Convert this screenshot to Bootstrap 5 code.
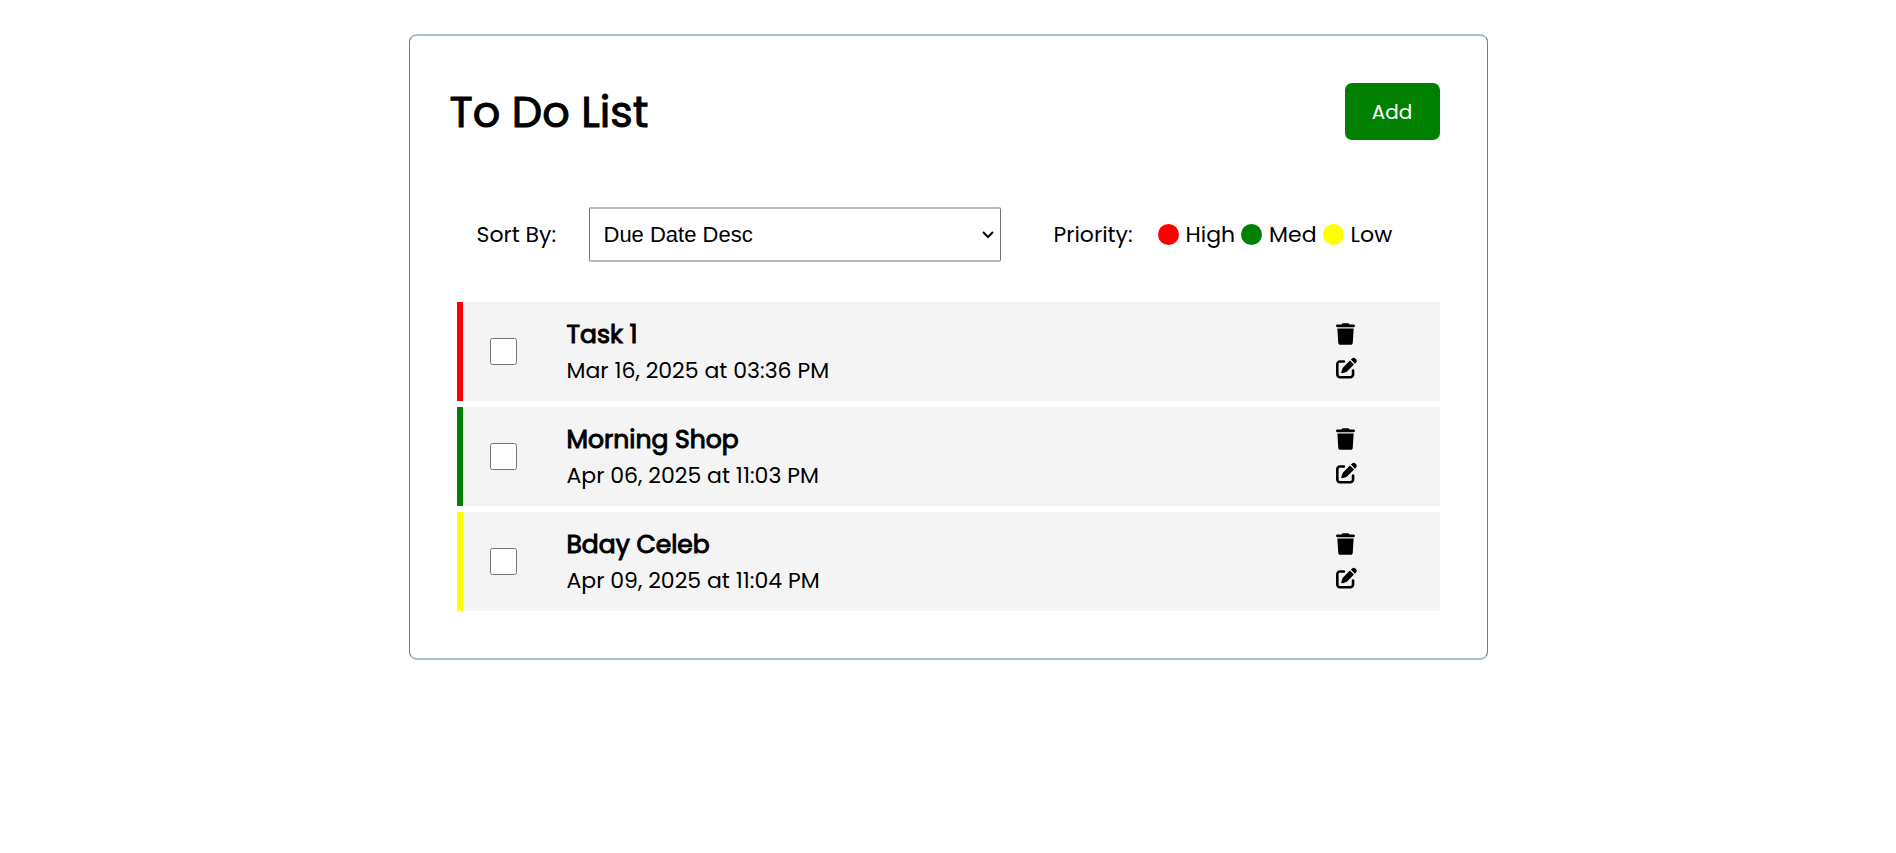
<!DOCTYPE html>
<html lang="en">
<head>
<meta charset="utf-8">
<meta name="viewport" content="width=device-width, initial-scale=1">
<title>To Do List</title>
<link href="https://cdn.jsdelivr.net/npm/bootstrap@5.3.0/dist/css/bootstrap.min.css" rel="stylesheet">
<style>
  body { font-family: Poppins, Inter, sans-serif; font-size: 22px; line-height: 36px; color: #000; background: #fff; }
  .todo { max-width: 1079px; margin-top: 34px; padding: 47px 47px 47px 40px; border: 1px solid #6283a3; border-width: 2px 1px; border-top-color: #a8bed3; border-bottom-color: #a8bed3; border-radius: 8px; }
  .todo-title { font-size: 43px; line-height: 56px; font-weight: 400; -webkit-text-stroke: 1px #000; }
  .btn-add { width: 95px; height: 57px; font-size: 20px; color: #fff; background: green; border: 0; border-radius: 7px; }
  .btn-add:hover { color: #fff; background: #006b00; }
  .controls { margin-top: 67px; padding-left: 27px; }
  .sort-label { width: 112px; }
  .sort-select { appearance: none; width: 412px; height: 55px; padding: 0 14px; font-family: "Liberation Sans", Arial, sans-serif; font-size: 22px; color: #000; background: #fff url("data:image/svg+xml,%3Csvg xmlns='http://www.w3.org/2000/svg' viewBox='0 0 12 8'%3E%3Cpath d='M1 1l5 5 5-5' fill='none' stroke='%23000' stroke-width='2'/%3E%3C/svg%3E") no-repeat right 6px center / 12px 8px; border: 1px solid #767676; border-width: 2px 1px; border-top-color: #b9b9b9; border-bottom-color: #b9b9b9; border-radius: 2px; }
  .priority { margin-left: 53px; }
  .priority-label { width: 104px; }
  .legend-list { gap: 6px; }
  .legend-item { gap: 7px; }
  .dot { width: 21px; height: 21px; border-radius: 50%; }
  .tasks { margin-top: 40px; padding-left: 7px; gap: 6px; }
  .task { min-height: 99px; padding-left: 27px; background: #f4f4f4; border-left: 6px solid; }
  .level-high { border-color: red; }
  .level-med { border-color: green; }
  .level-low { border-color: yellow; }
  .bg-high { background: red; }
  .bg-med { background: green; }
  .bg-low { background: yellow; }
  .task-check { width: 27px; height: 27px; margin-right: 50px; }
  .task-text { padding-top: 2px; }
  .task-name { font-size: 25px; line-height: 36px; -webkit-text-stroke: 1px #000; }
  .task-tools { width: 104px; gap: 12px; padding-bottom: 2px; }
  .task-tools button { color: #000; line-height: 0; }
  .task-tools svg { height: 22px; display: block; fill: currentColor; }
</style>
</head>
<body>
<svg class="d-none" aria-hidden="true">
  <symbol id="trash" viewBox="0 0 448 512"><path d="M135.2 17.7L128 32H32C14.3 32 0 46.3 0 64S14.3 96 32 96H416c17.7 0 32-14.3 32-32s-14.3-32-32-32H320l-7.2-14.3C307.4 6.8 296.3 0 284.2 0H163.8c-12.1 0-23.2 6.8-28.6 17.7zM416 128H32L53.2 467c1.6 25.3 22.6 45 47.9 45H346.9c25.3 0 46.3-19.7 47.9-45L416 128z"/></symbol>
  <symbol id="edit" viewBox="0 0 512 512"><path d="M471.6 21.7c-21.9-21.9-57.3-21.9-79.2 0L362.3 51.7l97.9 97.9 30.1-30.1c21.9-21.9 21.9-57.3 0-79.2L471.6 21.7zm-299.2 220c-6.1 6.1-10.8 13.6-13.5 21.9l-29.6 88.8c-2.9 8.6-.6 18.1 5.8 24.6s15.9 8.7 24.6 5.8l88.8-29.6c8.2-2.7 15.7-7.4 21.9-13.5L437.7 172.3 339.7 74.3 172.4 241.7zM96 64C43 64 0 107 0 160V416c0 53 43 96 96 96H352c53 0 96-43 96-96V320c0-17.7-14.3-32-32-32s-32 14.3-32 32v96c0 17.7-14.3 32-32 32H96c-17.7 0-32-14.3-32-32V160c0-17.7 14.3-32 32-32h96c17.7 0 32-14.3 32-32s-14.3-32-32-32H96z"/></symbol>
</svg>
<main class="todo mx-auto">
  <header class="d-flex justify-content-between align-items-center">
    <h1 class="todo-title mb-0">To Do List</h1>
    <button type="button" class="btn btn-add">Add</button>
  </header>
  <div class="controls d-flex flex-wrap align-items-center">
    <label class="sort-label" for="sort">Sort By:</label>
    <select class="sort-select" id="sort">
      <option>Due Date Asc</option>
      <option selected>Due Date Desc</option>
    </select>
    <div class="priority d-flex align-items-center">
      <span class="priority-label">Priority:</span>
      <div class="legend-list d-flex">
        <span class="legend-item d-flex align-items-center"><span class="dot bg-high"></span>High</span>
        <span class="legend-item d-flex align-items-center"><span class="dot bg-med"></span>Med</span>
        <span class="legend-item d-flex align-items-center"><span class="dot bg-low"></span>Low</span>
      </div>
    </div>
  </div>
  <ul class="tasks list-unstyled d-flex flex-column mb-0">
    <li class="task level-high d-flex align-items-center">
      <input class="task-check" type="checkbox" id="task1">
      <label class="task-text flex-grow-1" for="task1"><span class="task-name d-block">Task 1</span><span class="d-block">Mar 16, 2025 at 03:36 PM</span></label>
      <div class="task-tools d-flex flex-column align-items-start">
        <button type="button" class="btn p-0 border-0" aria-label="Delete"><svg width="19"><use href="#trash"/></svg></button>
        <button type="button" class="btn p-0 border-0" aria-label="Edit"><svg width="21"><use href="#edit"/></svg></button>
      </div>
    </li>
    <li class="task level-med d-flex align-items-center">
      <input class="task-check" type="checkbox" id="task2">
      <label class="task-text flex-grow-1" for="task2"><span class="task-name d-block">Morning Shop</span><span class="d-block">Apr 06, 2025 at 11:03 PM</span></label>
      <div class="task-tools d-flex flex-column align-items-start">
        <button type="button" class="btn p-0 border-0" aria-label="Delete"><svg width="19"><use href="#trash"/></svg></button>
        <button type="button" class="btn p-0 border-0" aria-label="Edit"><svg width="21"><use href="#edit"/></svg></button>
      </div>
    </li>
    <li class="task level-low d-flex align-items-center">
      <input class="task-check" type="checkbox" id="task3">
      <label class="task-text flex-grow-1" for="task3"><span class="task-name d-block">Bday Celeb</span><span class="d-block">Apr 09, 2025 at 11:04 PM</span></label>
      <div class="task-tools d-flex flex-column align-items-start">
        <button type="button" class="btn p-0 border-0" aria-label="Delete"><svg width="19"><use href="#trash"/></svg></button>
        <button type="button" class="btn p-0 border-0" aria-label="Edit"><svg width="21"><use href="#edit"/></svg></button>
      </div>
    </li>
  </ul>
</main>
<script src="https://cdn.jsdelivr.net/npm/bootstrap@5.3.0/dist/js/bootstrap.bundle.min.js"></script>
</body>
</html>
